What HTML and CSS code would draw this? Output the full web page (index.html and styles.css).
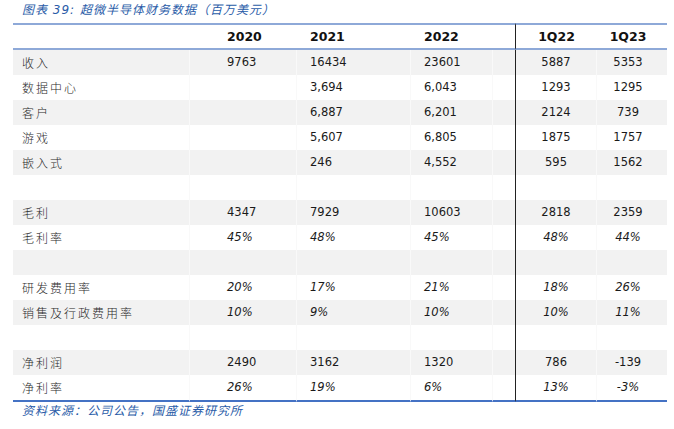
FILE: index.html
```html
<!DOCTYPE html>
<html lang="zh">
<head>
<meta charset="utf-8">
<title>超微半导体财务数据</title>
<link rel="stylesheet" href="styles.css">
</head>
<body>
<div class="page">
  <div class="title"><span class="t-lat">图表 39:</span> 超微半导体财务数据（百万美元）</div>
  <table class="fin">
    <colgroup>
      <col class="c-label"><col class="c-2020"><col class="c-2021"><col class="c-2022"><col class="c-gap"><col class="c-q1"><col class="c-q2">
    </colgroup>
    <thead>
      <tr>
        <th class="lab"></th>
        <th class="y20">2020</th>
        <th class="y21">2021</th>
        <th class="y22">2022</th>
        <th class="gap"></th>
        <th class="q1">1Q22</th>
        <th class="q2">1Q23</th>
      </tr>
    </thead>
    <tbody>
      <tr class="odd"><td class="lab">收入</td><td class="y20">9763</td><td class="y21">16434</td><td class="y22">23601</td><td class="gap"></td><td class="q1">5887</td><td class="q2">5353</td></tr>
      <tr><td class="lab">数据中心</td><td class="y20"></td><td class="y21">3,694</td><td class="y22">6,043</td><td class="gap"></td><td class="q1">1293</td><td class="q2">1295</td></tr>
      <tr class="odd"><td class="lab">客户</td><td class="y20"></td><td class="y21">6,887</td><td class="y22">6,201</td><td class="gap"></td><td class="q1">2124</td><td class="q2">739</td></tr>
      <tr><td class="lab">游戏</td><td class="y20"></td><td class="y21">5,607</td><td class="y22">6,805</td><td class="gap"></td><td class="q1">1875</td><td class="q2">1757</td></tr>
      <tr class="odd"><td class="lab">嵌入式</td><td class="y20"></td><td class="y21">246</td><td class="y22">4,552</td><td class="gap"></td><td class="q1">595</td><td class="q2">1562</td></tr>
      <tr><td class="lab"></td><td class="y20"></td><td class="y21"></td><td class="y22"></td><td class="gap"></td><td class="q1"></td><td class="q2"></td></tr>
      <tr class="odd"><td class="lab">毛利</td><td class="y20">4347</td><td class="y21">7929</td><td class="y22">10603</td><td class="gap"></td><td class="q1">2818</td><td class="q2">2359</td></tr>
      <tr class="pct"><td class="lab">毛利率</td><td class="y20">45%</td><td class="y21">48%</td><td class="y22">45%</td><td class="gap"></td><td class="q1">48%</td><td class="q2">44%</td></tr>
      <tr class="odd"><td class="lab"></td><td class="y20"></td><td class="y21"></td><td class="y22"></td><td class="gap"></td><td class="q1"></td><td class="q2"></td></tr>
      <tr class="pct"><td class="lab">研发费用率</td><td class="y20">20%</td><td class="y21">17%</td><td class="y22">21%</td><td class="gap"></td><td class="q1">18%</td><td class="q2">26%</td></tr>
      <tr class="odd pct"><td class="lab">销售及行政费用率</td><td class="y20">10%</td><td class="y21">9%</td><td class="y22">10%</td><td class="gap"></td><td class="q1">10%</td><td class="q2">11%</td></tr>
      <tr><td class="lab"></td><td class="y20"></td><td class="y21"></td><td class="y22"></td><td class="gap"></td><td class="q1"></td><td class="q2"></td></tr>
      <tr class="odd"><td class="lab">净利润</td><td class="y20">2490</td><td class="y21">3162</td><td class="y22">1320</td><td class="gap"></td><td class="q1">786</td><td class="q2">-139</td></tr>
      <tr class="pct last"><td class="lab">净利率</td><td class="y20">26%</td><td class="y21">19%</td><td class="y22">6%</td><td class="gap"></td><td class="q1">13%</td><td class="q2">-3%</td></tr>
    </tbody>
  </table>
  <div class="source">资料来源：公司公告，国盛证券研究所</div>
</div>
</body>
</html>
```

FILE: styles.css
```css
html, body {
  margin: 0;
  padding: 0;
  background: #ffffff;
}

.page {
  width: 674px;
  height: 429px;
  font-family: "DejaVu Sans", "Noto Sans CJK SC", sans-serif;
  color: #1a1a1a;
}

.title {
  height: 23px;
  box-sizing: border-box;
  padding: 3px 0 0 22px;
  font-family: "DejaVu Sans", "Noto Sans CJK SC", sans-serif;
  font-size: 12px;
  line-height: 15px;
  letter-spacing: 1px;
  font-style: italic;
  color: #2a5ca8;
  white-space: nowrap;
}

.fin {
  margin-left: 13px;
  width: 654px;
  table-layout: fixed;
  border-collapse: separate;
  border-spacing: 0;
}

.c-label { width: 177px; }
.c-2020 { width: 107px; }
.c-2021 { width: 114px; }
.c-2022 { width: 82px; }
.c-gap { width: 22px; }
.c-q1 { width: 82px; }
.c-q2 { width: 70px; }

.fin th {
  height: 23px;
  padding: 0;
  border-top: 2px solid #8ea9d8;
  border-bottom: 2px solid #8ea9d8;
  font-size: 12.5px;
  font-weight: bold;
  line-height: 23px;
  color: #111111;
  text-align: left;
  white-space: nowrap;
}

.fin td {
  height: 25px;
  padding: 0;
  font-size: 11.5px;
  line-height: 25px;
  text-align: left;
  white-space: nowrap;
  color: #1a1a1a;
}

.fin tr.odd td {
  background: #f2f2f2;
}

.fin td.lab,
.fin td.y20,
.fin td.y21,
.fin td.y22,
.fin td.q1 {
  border-right: 1px solid #f9f9f9;
}

.fin td.lab {
  padding-left: 9px;
  font-family: "Noto Sans CJK SC", sans-serif;
  font-weight: 300;
  font-size: 12px;
  letter-spacing: 2px;
  color: #2a2a2a;
}

.fin .y20 { padding-left: 37px; }
.fin .y21 { padding-left: 13px; }
.fin .y22 { padding-left: 13px; }

.fin .q1 {
  border-left: 1px solid #222222;
  text-align: center;
}

.fin .q2 {
  text-align: center;
  padding-right: 8px;
}

.fin tr.pct td {
  font-style: italic;
}

.fin tr.pct td.lab {
  font-style: normal;
}

.fin tr.last td {
  border-bottom: 2px solid #4472c4;
}

.source {
  padding: 1px 0 0 22px;
  font-family: "Noto Sans CJK SC", sans-serif;
  font-size: 12px;
  line-height: 14px;
  letter-spacing: 1px;
  font-style: italic;
  color: #2a5ca8;
}
```
